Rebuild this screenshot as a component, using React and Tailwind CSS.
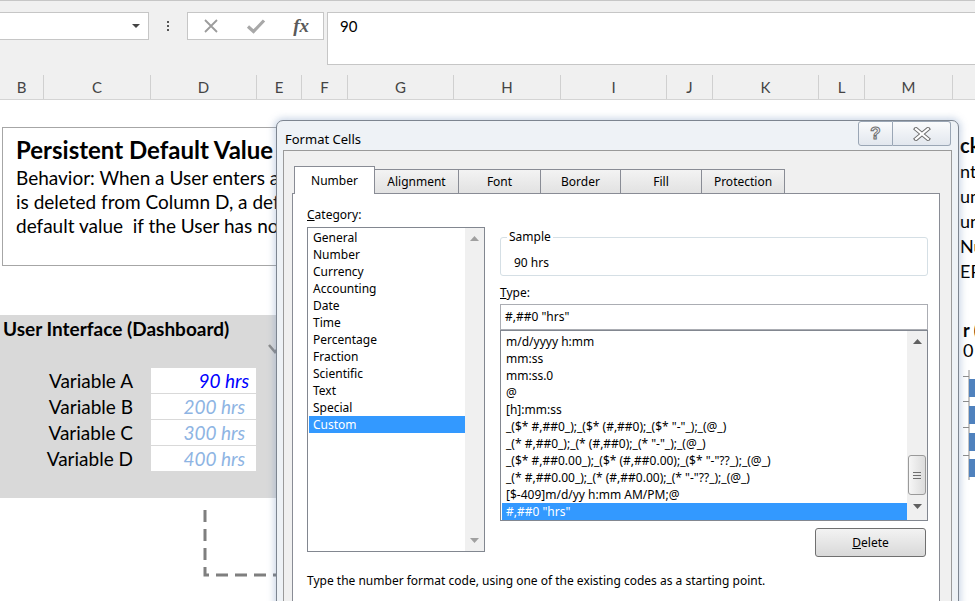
import React from "react";

function Tri({ dir = "up", color = "#7a7a7a" }) {
  return (
    <svg width="9" height="5" viewBox="0 0 9 5">
      {dir === "up" ? (
        <path d="M0 5 L4.5 0 L9 5 Z" fill={color} />
      ) : (
        <path d="M0 0 L9 0 L4.5 5 Z" fill={color} />
      )}
    </svg>
  );
}

const cols = [
  ["B", 44],
  ["C", 107],
  ["D", 106],
  ["E", 45],
  ["F", 46],
  ["G", 106],
  ["H", 107],
  ["I", 106],
  ["J", 46],
  ["K", 106],
  ["L", 46],
  ["M", 88],
  ["", 40],
];

const categories = [
  "General",
  "Number",
  "Currency",
  "Accounting",
  "Date",
  "Time",
  "Percentage",
  "Fraction",
  "Scientific",
  "Text",
  "Special",
  "Custom",
];

const types = [
  "m/d/yyyy h:mm",
  "mm:ss",
  "mm:ss.0",
  "@",
  "[h]:mm:ss",
  '_($* #,##0_);_($* (#,##0);_($* "-"_);_(@_)',
  '_(* #,##0_);_(* (#,##0);_(* "-"_);_(@_)',
  '_($* #,##0.00_);_($* (#,##0.00);_($* "-"??_);_(@_)',
  '_(* #,##0.00_);_(* (#,##0.00);_(* "-"??_);_(@_)',
  "[$-409]m/d/yy h:mm AM/PM;@",
  '#,##0 "hrs"',
];

const tabs = [
  ["Alignment", 85],
  ["Font", 83],
  ["Border", 81],
  ["Fill", 82],
  ["Protection", 84],
];

const vars = [
  ["Variable A", "90 hrs", true],
  ["Variable B", "200 hrs", false],
  ["Variable C", "300 hrs", false],
  ["Variable D", "400 hrs", false],
];

export default function App() {
  return (
    <div className="relative w-[975px] h-[601px] overflow-hidden bg-white text-black font-['Noto_Sans',sans-serif]">
      {/* formula bar area */}
      <div className="h-[75px] bg-[#f0f0f0] border-t border-[#c6c6c6] flex items-start pt-[11px]">
        <div className="w-[149px] h-[28px] bg-white border border-l-0 border-[#c6c6c6] flex items-center justify-end pr-[8px]">
          <svg width="8" height="4" viewBox="0 0 8 4">
            <path d="M0 0 H8 L4 4 Z" fill="#444" />
          </svg>
        </div>
        <div className="w-[38px] h-[28px] flex flex-col items-center justify-center gap-[2px]">
          <div className="w-[2px] h-[2px] bg-[#555]" />
          <div className="w-[2px] h-[2px] bg-[#555]" />
          <div className="w-[2px] h-[2px] bg-[#555]" />
        </div>
        <div className="w-[137px] h-[28px] bg-white border border-[#c6c6c6] flex items-center">
          <div className="w-[46px] flex justify-center">
            <svg width="16" height="16" viewBox="0 0 16 16">
              <path d="M2 2 L14 14 M14 2 L2 14" stroke="#9c9c9c" strokeWidth="1.8" />
            </svg>
          </div>
          <div className="w-[46px] flex justify-center">
            <svg width="20" height="16" viewBox="0 0 20 16">
              <path d="M2 8.5 L7.5 13.5 L18 2.5" stroke="#a8a8a8" strokeWidth="3.2" fill="none" />
            </svg>
          </div>
          <div className="w-[44px] flex justify-center font-['Liberation_Serif',serif] italic font-bold text-[19px] leading-[20px] text-[#5a5a5a]">
            fx
          </div>
        </div>
        <div className="ml-[3px] flex-1 h-[53px] bg-white border border-r-0 border-[#c6c6c6] pl-[12px] pt-[3px] text-[15px] leading-[20px] font-['Lato',sans-serif]">
          90
        </div>
      </div>

      {/* column headers */}
      <div className="h-[25px] bg-[#f0f0f0] border-b border-[#d4d4d4] flex font-['Lato',sans-serif] text-[15px] text-[#444]">
        {cols.map(([c, w], i) => (
          <div
            key={i}
            style={{ width: w }}
            className="shrink-0 border-r border-[#d0d0d0] flex items-center justify-center leading-[24px]"
          >
            {c}
          </div>
        ))}
      </div>

      {/* sheet */}
      <div className="flex h-[501px] font-['Lato',sans-serif]">
        <div className="relative w-[959px] shrink-0 pt-[27px]">
          <div className="ml-[2px] w-[300px] h-[139px] border border-[#a6a6a6] pl-[13px] pt-[8px]">
            <div className="w-[260px] overflow-hidden whitespace-pre">
              <div className="text-[24px] font-bold leading-[28px]">Persistent Default Value</div>
              <div className="mt-[2px] text-[19px] leading-[24px]">
                <div>Behavior: When a User enters a value</div>
                <div>is deleted from Column D, a default</div>
                <div>default value  if the User has not</div>
              </div>
            </div>
          </div>

          <div className="mt-[49px] w-[300px] h-[183px] bg-[#d9d9d9]">
            <div className="pl-[3px] pt-[3px] text-[19px] font-bold leading-[22px]">User Interface (Dashboard)</div>
            <div className="mt-[28px]">
              {vars.map(([l, v, first]) => (
                <div key={l} className="flex h-[26px]">
                  <div className="w-[133px] text-right text-[19px] leading-[26px]">{l}</div>
                  <div className="w-[18px]" />
                  <div
                    className={`w-[105px] h-[25px] bg-white text-right italic text-[19px] leading-[25px] ${
                      first ? "pr-[7px] text-[#0000ff]" : "pr-[11px] text-[#8eb4e3]"
                    }`}
                  >
                    {v}
                  </div>
                </div>
              ))}
            </div>
          </div>

          <svg className="ml-[202px] mt-[10px]" width="90" height="72" viewBox="0 0 90 72">
            <path d="M3 2 V67 H90" stroke="#7f7f7f" strokeWidth="3" fill="none" strokeDasharray="12 7" />
          </svg>

          <svg className="absolute left-[268px] top-[244px]" width="14" height="10" viewBox="0 0 14 10">
            <path d="M1 1 L7 8 L13 1" stroke="#8a8a8a" strokeWidth="2.5" fill="none" />
          </svg>
        </div>

        <div className="flex-1 overflow-hidden whitespace-nowrap pt-[31px] pl-px">
          <div className="text-[20px] font-bold leading-[28px]">ck</div>
          <div className="text-[18px] leading-[25px]">nt</div>
          <div className="text-[18px] leading-[25px]">un</div>
          <div className="text-[18px] leading-[25px]">un</div>
          <div className="text-[18px] leading-[25px]">Nu</div>
          <div className="text-[18px] leading-[25px]">ER</div>
          <div className="mt-[36px] pl-[3px] text-[18px] font-bold leading-[20px]">r (</div>
          <div className="pl-[3px] text-[18px] leading-[20px]">0</div>
          <svg className="-ml-px mt-[10px]" width="16" height="112" viewBox="0 0 16 112">
            <path d="M10 0 V110" stroke="#8c8c8c" strokeWidth="1" />
            <path d="M4 6.5 H10 M4 31.5 H10 M4 57.5 H10 M4 85.5 H10" stroke="#8c8c8c" strokeWidth="1" />
            <rect x="10" y="9" width="6" height="18" fill="#4f81bd" />
            <rect x="10" y="36" width="6" height="18" fill="#4f81bd" />
            <rect x="10" y="63" width="6" height="18" fill="#4f81bd" />
            <rect x="10" y="89" width="6" height="18" fill="#4f81bd" />
          </svg>
        </div>
      </div>

      {/* Format Cells dialog */}
      <div className="absolute left-[276px] top-[120px] w-[683px] h-[500px] rounded-t-[7px] border border-[#7d8590] bg-[#eef2f6] shadow-[0_0_7px_2px_rgba(110,140,185,0.35)] flex flex-col">
        <div className="h-[29px] flex items-start shrink-0">
          <span className="pl-[8px] pt-[9px] text-[13px] leading-[18px]">Format Cells</span>
          <div className="ml-auto mr-[7px] flex">
            <div className="w-[35px] h-[25px] border border-[#9aa6b5] rounded-l-[3px] bg-gradient-to-b from-[#fafbfc] to-[#e2e7ee] flex items-center justify-center">
              <span className="font-['Liberation_Sans',sans-serif] font-bold text-[17px] leading-[18px] text-transparent [-webkit-text-stroke:1px_#6e6e6e]">
                ?
              </span>
            </div>
            <div className="w-[58px] h-[25px] border border-l-0 border-[#9aa6b5] rounded-r-[3px] bg-gradient-to-b from-[#fafbfc] to-[#e2e7ee] flex items-center justify-center">
              <svg width="18" height="14" viewBox="0 0 18 14">
                <path d="M3 2 L15 12 M15 2 L3 12" stroke="#6e6e6e" strokeWidth="4.2" strokeLinecap="square" />
                <path d="M3 2 L15 12 M15 2 L3 12" stroke="#ffffff" strokeWidth="2.2" strokeLinecap="square" />
              </svg>
            </div>
          </div>
        </div>

        <div className="ml-[6px] mr-[6px] flex-1 border border-[#9a9a9a] bg-[#f0f0f0] pl-[8px] pr-[11px] pt-[15px] text-[12px] leading-[16px]">
          {/* tabs */}
          <div className="flex items-end h-[27px] pl-[2px]">
            <div className="relative z-10 w-[81px] h-[28px] -mb-px bg-white border border-b-0 border-[#898c95] flex items-center justify-center">
              Number
            </div>
            {tabs.map(([t, w]) => (
              <div
                key={t}
                style={{ width: w }}
                className="h-[24px] -ml-px border border-b-0 border-[#898c95] bg-gradient-to-b from-[#f3f3f3] to-[#e2e2e2] flex items-center justify-center"
              >
                {t}
              </div>
            ))}
          </div>

          {/* panel */}
          <div className="h-[420px] border border-[#898c95] bg-white pl-[14px]">
            <div className="flex">
              {/* category */}
              <div className="w-[178px] pt-[13px]">
                <div>
                  <span className="underline">C</span>ategory:
                </div>
                <div className="mt-[4px] h-[325px] border border-[#828790] flex">
                  <div className="flex-1 pt-[1px]">
                    {categories.map((c) => (
                      <div
                        key={c}
                        className={`ml-px h-[17px] leading-[17px] pl-[4px] ${
                          c === "Custom" ? "bg-[#3399ff] text-white" : ""
                        }`}
                      >
                        {c}
                      </div>
                    ))}
                  </div>
                  <div className="w-[19px] bg-[#f0f0f0] flex flex-col items-center justify-between py-[8px]">
                    <Tri dir="up" color="#a0a0a0" />
                    <Tri dir="down" color="#a0a0a0" />
                  </div>
                </div>
              </div>

              {/* right */}
              <div className="ml-[15px] w-[428px] pt-[35px]">
                <fieldset className="border border-[#d5dfe5] rounded-[3px] pb-[4px]">
                  <legend className="ml-[6px] px-[2px]">Sample</legend>
                  <div className="pl-[13px] pt-[10px]">90 hrs</div>
                </fieldset>
                <div className="mt-[9px]">
                  <span className="underline">T</span>ype:
                </div>
                <div className="mt-[3px] h-[26px] border border-[#abadb3] pl-[4px] leading-[24px]">#,##0 "hrs"</div>
                <div className="h-[191px] border border-[#828790] flex">
                  <div className="flex-1 pt-[2px] whitespace-nowrap overflow-hidden">
                    {types.map((t, i) => (
                      <div
                        key={i}
                        className={`ml-px h-[17px] leading-[17px] pl-[4px] ${
                          i === types.length - 1 ? "bg-[#3399ff] text-white" : ""
                        }`}
                      >
                        {t}
                      </div>
                    ))}
                  </div>
                  <div className="w-[20px] bg-[#f0f0f0] flex flex-col items-center pt-[8px]">
                    <Tri dir="up" color="#606060" />
                    <div className="mt-[111px] w-[18px] h-[40px] rounded-[3px] border border-[#9a9a9a] bg-gradient-to-r from-[#f6f6f6] to-[#dcdcdc] flex flex-col items-center justify-center gap-[2px]">
                      <div className="w-[8px] h-px bg-[#6f6f6f]" />
                      <div className="w-[8px] h-px bg-[#6f6f6f]" />
                      <div className="w-[8px] h-px bg-[#6f6f6f]" />
                    </div>
                    <div className="mt-[9px]">
                      <Tri dir="down" color="#606060" />
                    </div>
                  </div>
                </div>
                <div className="mt-[7px] flex justify-end pr-[2px]">
                  <div className="w-[111px] h-[29px] rounded-[3px] border border-[#707070] bg-gradient-to-b from-[#f3f3f3] to-[#d9d9d9] flex items-center justify-center">
                    <span>
                      <span className="underline">D</span>elete
                    </span>
                  </div>
                </div>
              </div>
            </div>
            <div className="mt-[16px]">Type the number format code, using one of the existing codes as a starting point.</div>
          </div>
        </div>
      </div>
    </div>
  );
}
